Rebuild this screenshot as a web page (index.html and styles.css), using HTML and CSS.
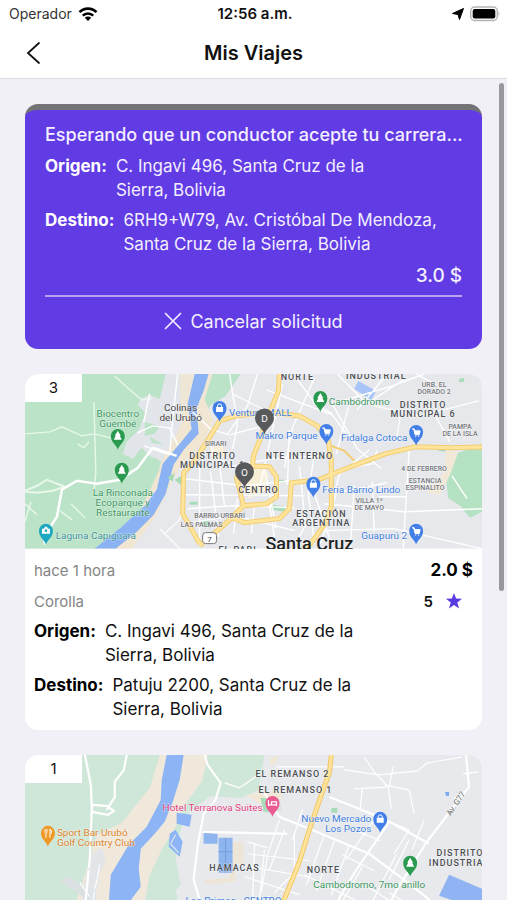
FILE: index.html
```html
<!DOCTYPE html>
<html lang="es">
<head>
<meta charset="utf-8">
<meta name="viewport" content="width=device-width, initial-scale=1">
<title>Mis Viajes</title>
<link rel="stylesheet" href="styles.css">
</head>
<body>
<svg class="defs" aria-hidden="true">
  <defs>
    <path id="pin" d="M0 0C-1-5-7-7-7-14a7 7 0 0 1 14 0C7-7 1-5 0 0z"/>
    <path id="tree" d="M0-19l-3 5h1l-2 4h8l-2-4h1z" fill="#fff"/>
    <g id="bag"><path d="M-3.500-15h7v5h-7z" fill="#fff"/><path d="M-2-15v-1a2 2 0 0 1 4 0v1" fill="none" stroke="#fff"/></g>
    <path id="cart" d="M-4-17h2l1 2h5l-1 4h-4l-1-4M-1-9.500h1M2-9.500h1" fill="#fff" stroke="#fff"/>
    <path id="stop" d="M0 0C-1-7-9.500-9-9.500-17a9.500 9.500 0 0 1 19 0C9.500-9 1-7 0 0z"/>
    <path id="ring" d="M255 0l-1 17-9 22-8 23-8 20-1 11M245 38l-33 4-17 5-11 18-14 22-11 12-1 41 17 30M245 38l30 4 18 10 11 15 3 20v45l-6 18-20 27M228 92l17 1 7 10v20l-10 7-23 2-3-12-4-16 8-10zM219 132l-17 17-27 23M205 143l15 6 35-4 10-10 2-26 27-3 32-13 35-13 30-7 36 1 43-1"/>
    <path id="avenue" d="M307 0l-2 18-8 22-12 35-10 32-12 30-16 38"/>
  </defs>
</svg>
<div class="app">
  <div class="status">
    <div class="carrier"><span>Operador</span>
      <svg width="20" height="16" viewBox="0 0 20 16" aria-hidden="true"><g fill="none" stroke="#000" stroke-width="2.600"><path d="M1.500 6.200a12 12 0 0 1 17 0"/><path d="M4.800 9.600a7.400 7.400 0 0 1 10.400 0"/></g><path d="M10 15l-3.200-3.300a4.600 4.600 0 0 1 6.400 0z"/></svg>
    </div>
    <div class="clock">12:56 a.m.</div>
    <div class="power">
      <svg width="12" height="12" viewBox="0 0 12 12" aria-hidden="true"><path d="M11.500.500L7.500 11.500 6 6.500.500 5.500z" stroke="#000"/></svg>
      <svg width="31" height="16" viewBox="0 0 31 16" aria-hidden="true"><rect x=".700" y="1" width="26.600" height="13.500" rx="4" fill="#fff" stroke="#b4b4b4" stroke-width="1.400"/><rect x="2.700" y="3" width="22.600" height="9.500" rx="2"/><path d="M28.500 5.500q2 2 0 4.500z" fill="#b4b4b4"/></svg>
    </div>
  </div>
  <header class="bar">
    <button class="back" type="button" aria-label="Volver"><svg width="16" height="24" viewBox="0 0 16 24" aria-hidden="true"><path d="M14 2L3 12 14 22" fill="none" stroke="#111" stroke-width="1.800" stroke-linecap="round"/></svg></button>
    <h1>Mis Viajes</h1>
  </header>
  <main class="content">
    <section class="pending">
      <h2>Esperando que un conductor acepte tu carrera...</h2>
      <dl class="route">
        <div><dt>Origen:</dt><dd>C. Ingavi 496, Santa Cruz de la<br>Sierra, Bolivia</dd></div>
        <div><dt>Destino:</dt><dd>6RH9+W79, Av. Cristóbal De Mendoza,<br>Santa Cruz de la Sierra, Bolivia</dd></div>
      </dl>
      <p class="fare">3.0 $</p>
      <button class="cancel" type="button"><svg width="18" height="18" viewBox="0 0 18 18" aria-hidden="true"><path d="M1.500 1.500l15 15M16.500 1.500l-15 15" stroke="currentColor" stroke-width="1.700" stroke-linecap="round"/></svg>Cancelar solicitud</button>
    </section>

    <article class="trip">
      <div class="map">
        <svg viewBox="0 0 458 175" preserveAspectRatio="xMidYMid slice">
          <rect width="458" height="175" fill="#e6e8ec"/>
          <path d="M0 0h158l-3 70-20 50-35 35-28 20H0z" fill="#bbe3c7"/>
          <path d="M117 24l8-3 10 4 6-25h22l3 40-5 30-14 22-15-3-15-15-9 11-10-5 4-12 12-12 7-17-8-8z" fill="#e2e5e9"/>
          <path d="M120 48l15 4-5 8-10 2zM112 82l18 2 8 5-14 3zM125 63l14 8-12-2z" fill="#bbe3c7"/>
          <path d="M155 0h15l-4 30 2 30-13 16-15 15-6 3 10-20 12-20z" fill="#eee6d6"/>
          <path d="M187 0h29l-15 22-16 10-6 20-6-12z" fill="#bbe3c7"/>
          <path d="M182 0h6l-8 25 9 22-12 24-22 22-15 30-8 18-25 34H80l35-36 30-66z" fill="#f1e6d2"/>
          <path d="M170 0h14l-5 17-7 17 2 26-15 16-10 15-8 29-12 21-18 18-20 16H70l27-22 23-21 12-16 6-26 17-20 12-15-4-25z" fill="#8bb3f4"/>
          <path d="M150 106l7-4v10zM143 104l7-5-2 9z" fill="#a8d9b5"/>
          <path d="M458 70l-26 10-10 24 2 20 12 8 10 12 12-6z" fill="#b5e2c2"/>
          <path d="M422 75l12 4-8 22-10 20-14-2 18-20z" fill="#f2e8d8"/>
          <path d="M414 77l7-4v5zM248 131l13 2-1 5-13-2zM252 106h8l-1 3h-8zM165 128h8v3h-8zM177 148l7-2 2 8-8-2zM435 5l5-1v4h-5z" fill="#a9dcb8"/>
          <path d="M334 7l18 10-5 9-17-11z" fill="#a9c5f7"/>
          <path d="M220 95l17-5 7 11-1 15-18 9-6-15zM185 75l12-5 5 12-13 4z" fill="#f7efd8"/>
          <g fill="none" stroke="#e9f7eb" stroke-width="1.400">
            <path d="M69 28l2 70-2 22M0 60l25-2 12-5 20 9 12-2 17 4M53 70l6 4 5-6M90 2l13 12 14 12 10-2M35 137l12 9M46 130l14 14M0 130l12 11M6 128l-6 20"/>
            <path d="M0 117l12-5 10-6 18 7-12 4-16 2-12-1" stroke-width="2"/>
            <path d="M20 171l-1-8 13-20 5-27 15-9 20 3 23-4 18-12 15-20 24 8" stroke="#fff" stroke-width="2.500"/>
          </g>
          <g fill="none" stroke="#fff" stroke-width="1.400">
            <path d="M153 0l-5 45-3 35M113 59l15-7 17 2 8 17M125 20l-6 28M119 72l26 9M168 38l18 17 18 6M185 70l10 20 5 43M205 0l8 50-5 25M233 0l-10 32-20 28M242 16l66 25 15 20M258 10l-23 105M290 4l-22 50-8 40M270 2l22 29 16 9M313 0l30 30 37-25M205 61l45-12M204 93l43-8 48-3M160 105l60 7 75-8M160 121l120 1M163 135l45-3 62 2M160 150l50-8 60 15M175 90v75M186 98l8 65M213 125l-4 35M230 130l-3 30M245 130l5 35M275 92l6 60-13 23M265 56l-2 55M290 80l-6 40 6 50M240 95l12 60M300 130l80 8 78-3M312 120l-16 50M330 112l-4 62M348 108l2 50M313 119l50-10M385 76l-6 99M308 30l25 45 24 20M308 30l60-18 48-18M350 32l45 10 60-15M410 40l16 28M355 123h28M300 157l70-2 88 20M428 102l15 23M345 76l-30 25-8 30M363 0l-30 36M392 0l20 11M285 105l22 65M325 30l-13 50"/>
            <path d="M140 160l14-13 6-15M135 155l20 20M208 20l38 19M205 90l-18-9M330 93l18-3 5-14M372 68l4-25" opacity=".8"/>
          </g>
          <g fill="none" stroke="#f4cd70"><use href="#ring" stroke-width="5"/><path d="M307 72l13 5 10 10" stroke-width="2"/></g>
          <use href="#ring" fill="none" stroke="#ffe49c" stroke-width="3"/>
          <rect x="178" y="159" width="14" height="11" rx="3" fill="#fff" stroke="#777"/><text class="tiny" x="185" y="168">7</text>
          <g class="place green"><text x="93" y="43">Biocentro</text><text x="93" y="53">Güembé</text><text x="98" y="122">La Rinconada</text><text x="98" y="132">Ecoparque y</text><text x="98" y="142">Restaurante</text><text x="335" y="31">Cambódromo</text></g>
          <g class="place teal"><text x="71" y="165">Laguna Capiguara</text></g>
          <g class="place blue"><text x="236" y="42">Ventura MALL</text><text x="262" y="65">Makro Parque</text><text x="350" y="67">Fidalga Cotoca</text><text x="337" y="119">Feria Barrio Lindo</text><text x="360" y="165">Guapurú 2</text></g>
          <g class="place dark"><text x="156" y="37">Colinas</text><text x="156" y="47">del Urubó</text></g>
          <g class="area"><text x="273" y="6">NORTE</text><text x="352" y="5">INDUSTRIAL</text><text x="188" y="85">DISTRITO</text><text x="188" y="94">MUNICIPAL 1</text><text x="275" y="85">NTE INTERNO</text><text x="234" y="119">CENTRO</text><text x="399" y="34">DISTRITO</text><text x="399" y="43">MUNICIPAL 6</text><text x="297" y="143">ESTACIÓN</text><text x="297" y="152">ARGENTINA</text><text x="213" y="179">EL PARI</text></g>
          <g class="area small"><text x="191" y="72">SIRARI</text><text x="195" y="144">BARRIO URBARÍ</text><text x="177" y="153">LAS PALMAS</text><text x="410" y="13">URB. EL</text><text x="410" y="20">DORADO 2</text><text x="436" y="55">PAMPA</text><text x="436" y="62">DE LA ISLA</text><text x="400" y="97">4 DE FEBRERO</text><text x="401" y="109">ESTANCIA</text><text x="401" y="116">ESPINALITO</text><text x="345" y="129">VILLA 1º</text><text x="345" y="136">DE MAYO</text></g>
          <text class="city" x="285" y="176">Santa Cruz</text>
          <g transform="translate(93 76)"><use href="#pin" fill="#2a9a50"/><use href="#tree"/></g>
          <g transform="translate(97 110)"><use href="#pin" fill="#2a9a50"/><use href="#tree"/></g>
          <g transform="translate(296 38)"><use href="#pin" fill="#2a9a50"/><use href="#tree"/></g>
          <g transform="translate(21 171)"><use href="#pin" fill="#1ba8c0"/><path d="M-4-16h2l1-2h2l1 2h2v5h-8z" fill="#fff"/><circle cy="-14" r="1.300" fill="#1ba8c0"/></g>
          <g transform="translate(195 48)"><use href="#pin" fill="#437fe8"/><use href="#bag"/></g>
          <g transform="translate(289 124)"><use href="#pin" fill="#437fe8"/><use href="#bag"/></g>
          <g transform="translate(302 71)"><use href="#pin" fill="#437fe8"/><use href="#cart"/></g>
          <g transform="translate(392 72)"><use href="#pin" fill="#437fe8"/><use href="#cart"/></g>
          <g transform="translate(392 171)"><use href="#pin" fill="#437fe8"/><use href="#cart"/></g>
          <g class="stop" transform="translate(240 61)"><use href="#stop"/><text y="-13">D</text></g>
          <g class="stop" transform="translate(220 115)"><use href="#stop"/><text y="-13">O</text></g>
        </svg>
        <span class="count">3</span>
      </div>
      <div class="details">
        <div class="line"><span>hace 1 hora</span><strong class="price">2.0 $</strong></div>
        <div class="line"><span>Corolla</span><span class="rating">5<svg width="16" height="16" viewBox="0 0 16 16" aria-hidden="true"><path d="M8 0l2.100 5.600 5.900.200-4.700 3.700L13 15.500 8 12l-5 3.500 1.700-6L0 5.800l5.900-.200z" fill="#5b3ae0"/></svg></span></div>
        <dl class="route">
          <div><dt>Origen:</dt><dd>C. Ingavi 496, Santa Cruz de la<br>Sierra, Bolivia</dd></div>
          <div><dt>Destino:</dt><dd>Patuju 2200, Santa Cruz de la<br>Sierra, Bolivia</dd></div>
        </dl>
      </div>
    </article>

    <article class="trip">
      <div class="map">
        <svg viewBox="0 0 458 175" preserveAspectRatio="xMidYMid slice">
          <rect width="458" height="175" fill="#e7e9ec"/>
          <path d="M0 0h240l-6 35-18 8-30-2-24 18-8 22-5 45 6 28-20 6-6 15H0z" fill="#cfe7d8"/>
          <path d="M135 0h48l-5 25-18 25-8 20-15 25-12 25-10 55H42l18-55 12-40 25-12 28-35z" fill="#efe8db"/>
          <path d="M150 98l6 32-17 22-14 23h-12l10-35z" fill="#cfe7d8"/>
          <path d="M142 0h17l-4 25-7 22-8 20-10 12-14 15-2 20 2 18-9 12-11 31H82l4-55 18-30 18-18 14-27 1-20z" fill="#8db4f4"/>
          <path d="M152 58l15 2-2 12-13-3zM145 79l6-4 7 12-3 15-11-10z" fill="#8db4f4"/>
          <path d="M205 87h14v22h-8v18l-28 3-5-5 27-2z" fill="#ede6d8"/>
          <path d="M179 78l14 1v10h-14zM194 83h14v35h-14z" fill="#8fb5ee"/><path d="M194 97h14M201 83v35" stroke="#739edd" fill="none"/>
          <path d="M65 100l12-7 4 12-9 20-2 50H50l7-30z" fill="#e3e5e8"/><path d="M35 126l10-5 25 20-6 5zM235 45l20-2 2 12-15 4z" fill="#dbe0e3"/>
          <path d="M222 40l35-5v9l-23 4zM246 3l8-2-2 6-7 5z" fill="#f0e7d5"/><path d="M236 43h17v14h-14zM307 53h6v5h-6z" fill="#a9dbb8"/>
          <path d="M425 120l33 14v22l-43-15z" fill="#8fb3f3"/><path d="M421 37h4v4h-3z" fill="#7fa9f0"/>
          <g fill="none" stroke="#fff" stroke-width="2.200">
            <path d="M60 0l6 30 1 23-2 50-7 72M67 50l15 1 7 5-6 4-16-3M102 0l-3 15-9 12v15l-8 13M180 0l3 10 13 18-5 17-12 14-6 32-4 34 9 30 2 20"/>
            <path d="M178 77l85 2M240 38l15 24 30 12 60 25 40 30 25 20M305 42l55 22 45 25M442 0l3 32-17 22-26 34-30 48-20 39M365 67l-33 48-30 50"/>
          </g>
          <g fill="none" stroke="#fff" stroke-width="1.200">
            <path d="M200 28l15 5 20-14M252 12h68M320 15l35 5 38-4 10-8 35-6M340 2l10 15 14 15 3 22M330 34l35-2 4-20M338 34l-2 20 16 8M360 30l25 5 5 24M430 44l8-8M439 19l15-2M365 67l20 8-15 24M330 75l26 11M350 65l-28 40M318 100l32 16M338 112l-20 35M372 100l-25 49M365 138l23 14M340 130l40 25M270 80v38l-20 20M255 65l-12 35-6 37M278 55l-10 30M223 87l20 6M223 99l62 7M215 110l68 12M220 122l55 18M230 90l-2 60M240 95l-6 60M260 75l-15 40M300 80l-18 50M310 86l-18 50M325 90l-18 50M280 120l60 30M385 85l-20 40M400 65l-12 30M55 128l10 14M75 110l-7 35"/>
            <path d="M62 112l13 15-9 15 12 30M50 173l24-25M151 80l-5 9 8 9" stroke="#dce8ed"/>
          </g>
          <use href="#avenue" fill="none" stroke="#f1c768" stroke-width="5"/>
          <use href="#avenue" fill="none" stroke="#ffe39a" stroke-width="3"/>
          <g class="area"><text x="268" y="22">EL REMANSO 2</text><text x="271" y="38">EL REMANSO 1</text><text x="210" y="116">HAMACAS</text><text x="299" y="118">NORTE</text><text x="436" y="101">DISTRITO</text><text x="435" y="111">INDUSTRIAL</text></g>
          <g class="place pink"><text x="188" y="56">Hotel Terranova Suites</text></g>
          <g class="place orange start"><text x="32" y="81">Sport Bar Urubó</text><text x="32" y="91">Golf Country Club</text></g>
          <g class="place blue"><text x="312" y="67">Nuevo Mercado</text><text x="324" y="77">Los Pozos</text><text x="209" y="149">Los Primos - CENTRO</text></g>
          <g class="place green"><text x="345" y="133">Cambodromo, 7mo anillo</text></g>
          <text class="street" transform="translate(434 50) rotate(-56)">Av. G77</text>
          <g transform="translate(23 92)"><use href="#pin" fill="#ef9825"/><path d="M-3-18v4M-1-18v4M-2-14v5M2-18v9M2-18q3 2 1 5" fill="none" stroke="#fff"/></g>
          <g transform="translate(248 62)"><use href="#pin" fill="#eb5b91"/><path d="M-4-17v6M-4-12h8v1M4-11v-4h-5v3" fill="none" stroke="#fff" stroke-width="1.200"/></g>
          <g transform="translate(356 78)"><use href="#pin" fill="#437fe8"/><use href="#bag"/></g>
          <g transform="translate(386 122)"><use href="#pin" fill="#2a9a50"/><use href="#tree"/></g>
        </svg>
        <span class="count">1</span>
      </div>
    </article>
  </main>
  <div class="thumb"></div>
</div>
</body>
</html>
```
FILE: styles.css
```css
* { box-sizing: border-box; }
body { margin: 0; background: #f0f0f6; color: #111; font-family: Inter, "Liberation Sans", sans-serif; }
h1, h2, p, dl, dd { margin: 0; }
button { border: 0; padding: 0; background: none; color: inherit; font: inherit; }
svg { display: block; flex: none; }
.defs { position: absolute; width: 0; height: 0; }

.app { position: relative; display: flex; flex-direction: column; height: 100vh; }
.status { display: grid; grid-template-columns: 1fr auto 1fr; align-items: center; height: 27px; padding: 0 6px 0 9px; background: #fff; font-size: 15px; }
.carrier, .power { display: flex; align-items: center; gap: 6px; }
.carrier { font-size: 14px; color: #333; }
.power { justify-content: flex-end; }
.clock { font-weight: 600; }
.bar { display: grid; grid-template-columns: 1fr auto 1fr; align-items: center; height: 52px; padding: 0 25px; background: #fff; border-bottom: 1px solid #dcdce0; }
.back { justify-self: start; }
h1 { font-size: 20px; line-height: 24px; font-weight: 600; }

.content { flex: 1; min-height: 0; overflow-y: auto; scrollbar-width: none; padding: 25px; }
.pending { margin-bottom: 25px; padding: 13px 20px 4px; border-top: 6px solid #747477; border-radius: 13px; background: #613be4; color: #f3efff; }
h2 { font-size: 18px; line-height: 24px; font-weight: 500; white-space: nowrap; }
.route { display: grid; gap: 6px; padding-top: 7px; font-size: 17px; line-height: 24px; }
.route div { display: flex; gap: 9px; }
dt { font-weight: 700; }
.pending dt { color: #fff; }
.fare { padding: 8px 0 7px; border-bottom: 2px solid #b7a4f3; text-align: right; font-size: 19px; line-height: 24px; font-weight: 500; }
.cancel { display: flex; align-items: center; justify-content: center; gap: 8px; width: 100%; height: 48px; font-size: 18px; }

.trip { margin-bottom: 25px; border-radius: 13px; overflow: hidden; background: #fff; }
.map { position: relative; }
.map svg { width: 100%; height: auto; }
.count { position: absolute; top: 0; left: 0; width: 57px; height: 28px; background: #fff; text-align: center; font-size: 15px; line-height: 28px; }
.details { padding: 6px 9px 9px; }
.line { display: flex; align-items: center; justify-content: space-between; height: 31px; color: #858585; font-size: 15px; }
.price { color: #000; font-size: 17px; }
.rating { display: flex; align-items: center; gap: 13px; padding-right: 11px; color: #111; font-weight: 600; }
.trip .route { padding-top: 2px; }
.trip dt { color: #000; }

.map text { font-family: Roboto, sans-serif; text-anchor: middle; paint-order: stroke; stroke: #ffffff90; stroke-width: 1px; }
.place { font-size: 10px; }
.place.start text { text-anchor: start; }
.green { fill: #3c9561; }
.teal { fill: #3c939b; }
.blue { fill: #3d7de0; }
.dark { fill: #444; }
.pink { fill: #e23d80; }
.orange { fill: #db842b; }
.area { fill: #4b4e53; font-size: 9px; font-weight: 500; letter-spacing: 1px; }
.small { fill: #74777b; font-size: 7px; letter-spacing: 0; }
.tiny { font-size: 8px; fill: #444; }
.street { font-size: 8px; fill: #666; }
.city { font-size: 18px; font-weight: 500; fill: #222; }
.stop { fill: #58595b; }
.map .stop text { fill: #fff; stroke: none; font-size: 10px; }
.thumb { position: absolute; top: 83px; right: 3px; width: 5px; height: 508px; border-radius: 3px; background: #98989e; }
```
